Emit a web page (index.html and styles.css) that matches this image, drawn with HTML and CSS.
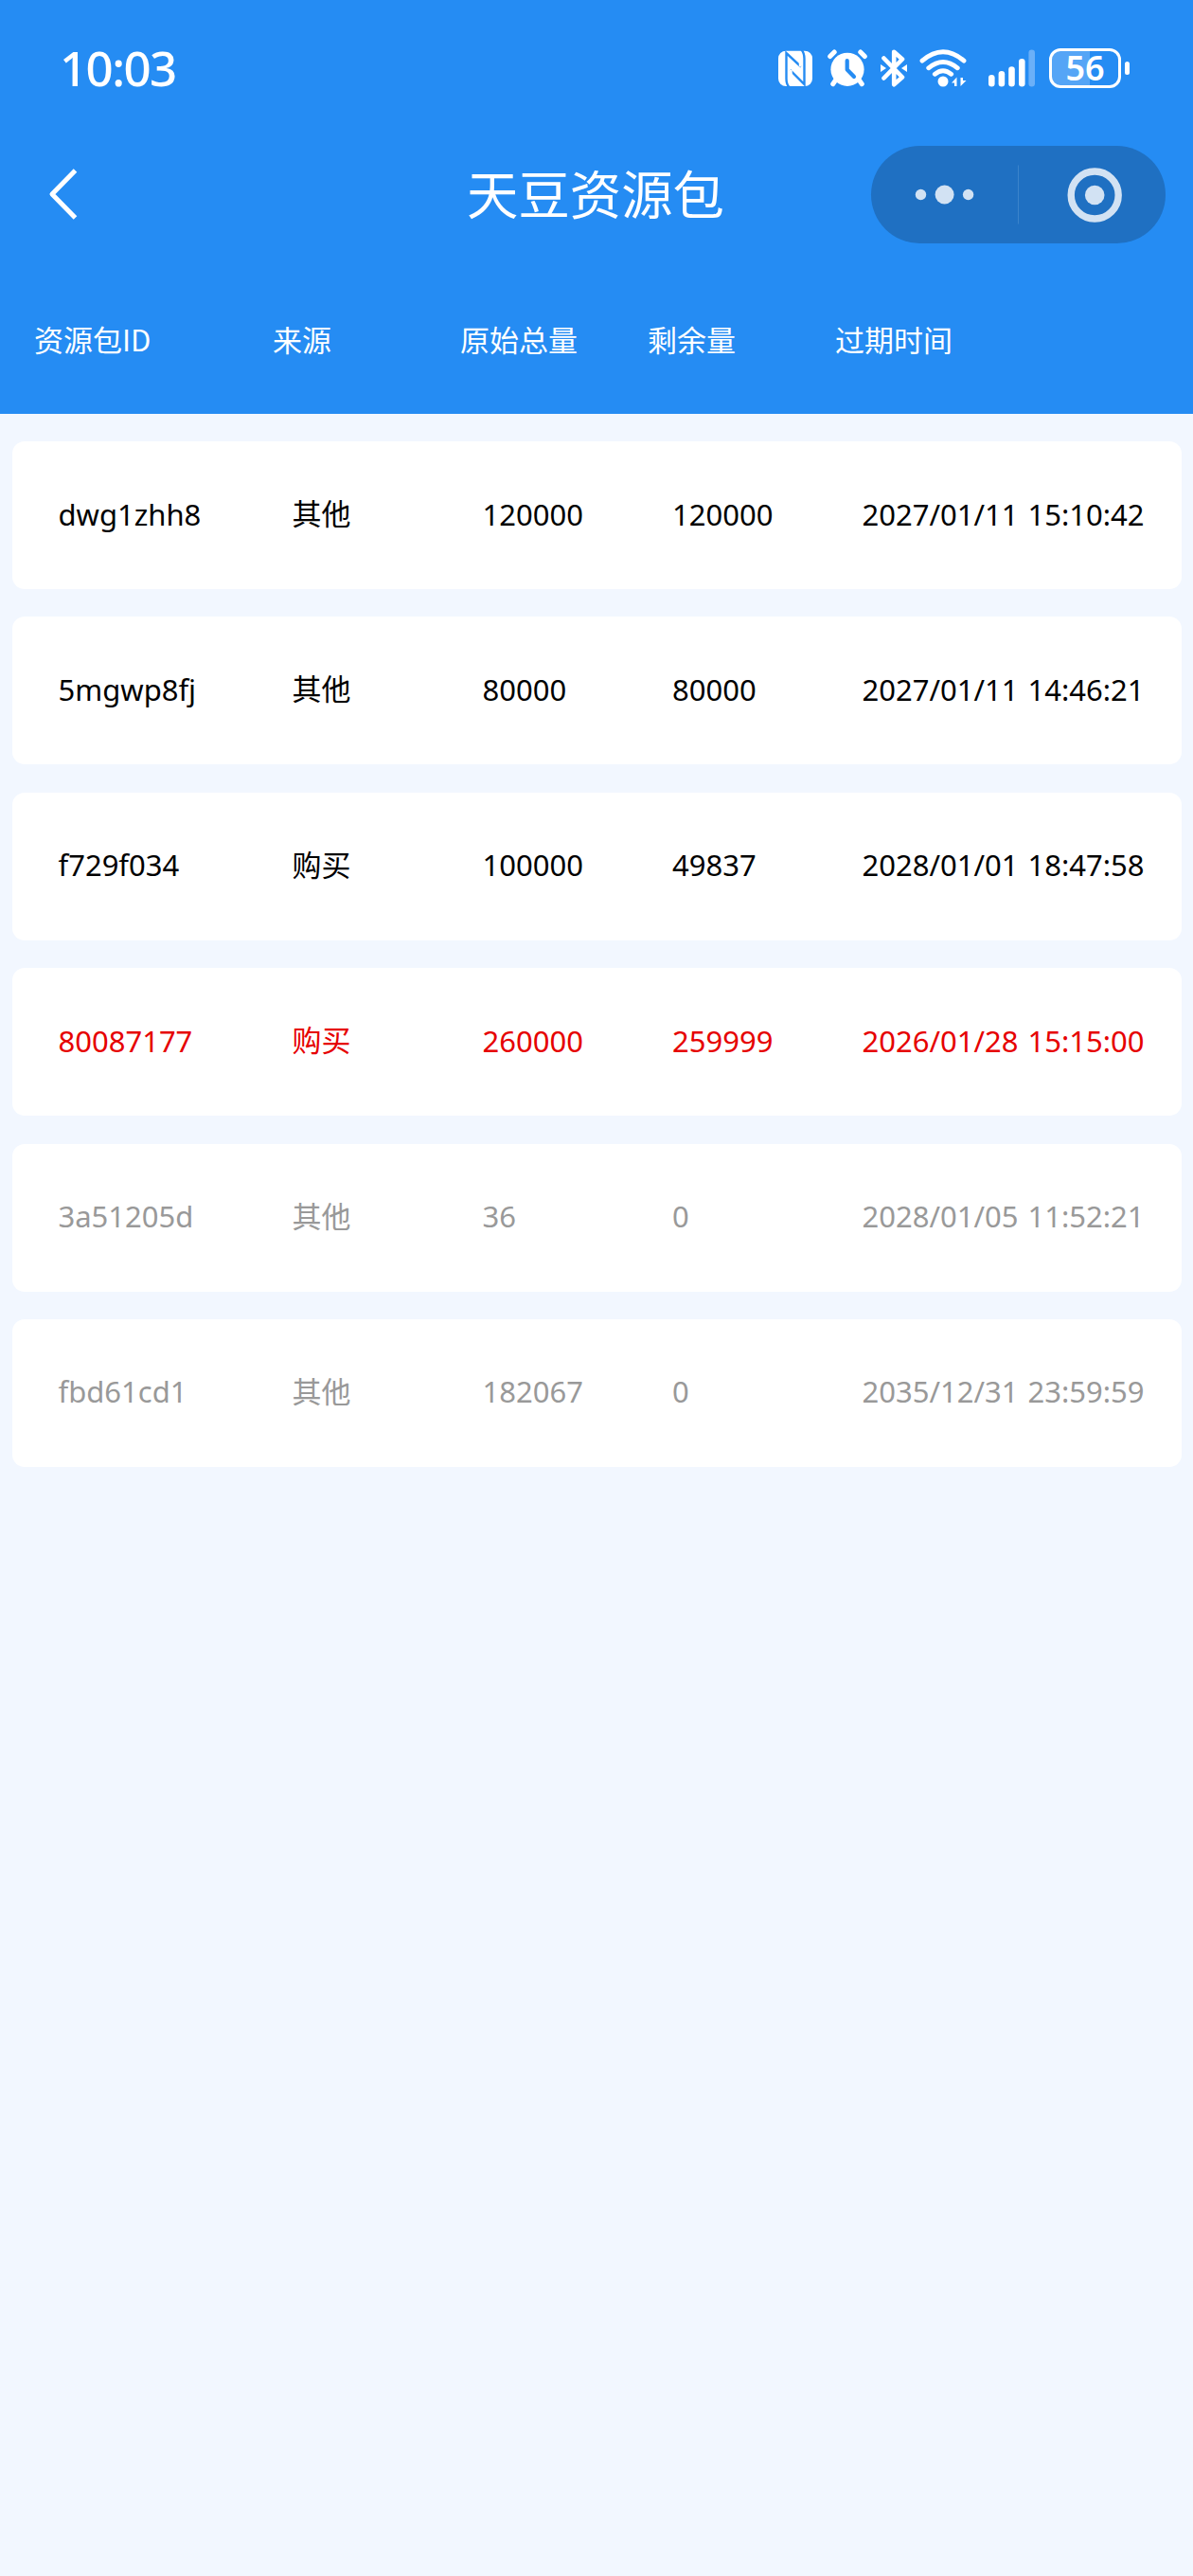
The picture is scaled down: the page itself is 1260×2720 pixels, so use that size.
FILE: index.html
```html
<!DOCTYPE html>
<html lang="zh-CN">
<head>
    <meta charset="UTF-8">
    <meta name="viewport" content="width=device-width, initial-scale=1.0">
    <title>天豆资源包</title>
    <link rel="stylesheet" href="styles.css">
</head>
<body>
    <div class="header">
        <!-- Status bar -->
        <div class="status-bar">
            <div class="time">10:03</div>
            <div class="status-icons">
                <svg class="nfc" width="36" height="40" viewBox="0 0 36 40">
                    <rect x="0" y="1.7" width="36" height="37.3" rx="8" fill="#fff"/>
                    <path d="M11.5 40 Q8.5 37 8.5 31 V4 L24 18.5" fill="none" stroke="#258cf3" stroke-width="2.4"/>
                    <path d="M24.5 0.5 Q27.5 4 27.5 10 V37 L12.5 22" fill="none" stroke="#258cf3" stroke-width="2.4"/>
                    <path d="M23.3 6 V18.5 M13.2 22 V33" fill="none" stroke="#fff" stroke-width="3"/>
                </svg>
                <svg class="alarm" width="42" height="40" viewBox="0 0 42 40">
                    <circle cx="21" cy="21.3" r="17.6" fill="#fff"/>
                    <path d="M2.7 7.5 L7.2 3 M34.8 3 L39.3 7.5 M9 32 L5.7 36.7 M33 32 L36.3 36.7" stroke="#fff" stroke-width="5" stroke-linecap="round"/>
                    <path d="M20.7 12 V21.5 L28 29" fill="none" stroke="#258cf3" stroke-width="4.2" stroke-linecap="round" stroke-linejoin="round"/>
                </svg>
                <svg class="bluetooth" width="28" height="40" viewBox="0 0 28 40">
                    <path d="M3.5 9.5 L23 29.5 L14.2 37.2 V2.8 L23 10.5 L3.5 30.5" fill="none" stroke="#fff" stroke-width="4.6" stroke-linecap="round" stroke-linejoin="round"/>
                    <path d="M0 16 L6 20 L0 24 Z M28 16 L22 20 L28 24 Z" fill="#fff"/>
                </svg>
                <svg class="wifi" width="50" height="40" viewBox="0 0 50 40">
                    <path d="M3 12.2 Q25 -6.5 47 12.2 M9.7 19.8 Q25 7.2 40.3 19.8 M16.3 26.3 Q25 19 33.7 26.3" fill="none" stroke="#fff" stroke-width="4.8" stroke-linecap="round"/>
                    <circle cx="25" cy="34" r="5.5" fill="#fff"/>
                    <path d="M34 35.5 L39.5 29.5 V39 H37 V35.5 Z M49.5 33 L43.5 39 V30 H46 V33 Z" fill="#fff"/>
                </svg>
                <svg class="signal" width="49" height="40" viewBox="0 0 49 40">
                    <rect x="0" y="27" width="6.6" height="12.6" rx="3.3" fill="#fff"/>
                    <rect x="10.6" y="23" width="6.6" height="16.6" rx="3.3" fill="#fff"/>
                    <rect x="21.2" y="18.3" width="6.6" height="21.3" rx="3.3" fill="#fff"/>
                    <rect x="32" y="10" width="6.6" height="29.6" rx="3.3" fill="#fff"/>
                    <rect x="42.4" y="0.6" width="6.6" height="39" rx="3.3" fill="#6bb0f8"/>
                </svg>
                <div class="battery">
                    <span class="battery-level">56</span>
                </div>
                <div class="battery-cap"></div>
            </div>
        </div>

        <!-- Nav bar -->
        <div class="nav-bar">
            <svg class="back" width="32" height="56" viewBox="0 0 32 56">
                <path d="M28.5 3 L4 28 L28.5 53" fill="none" stroke="#fff" stroke-width="5" stroke-linejoin="round"/>
            </svg>
            <h1>天豆资源包</h1>
            <div class="capsule">
                <svg width="311" height="103" viewBox="0 0 311 103">
                    <circle cx="52.5" cy="51.5" r="5.7"/>
                    <circle cx="77.6" cy="51.5" r="10"/>
                    <circle cx="102.6" cy="51.5" r="5.7"/>
                    <rect class="divider" x="155" y="20.5" width="1" height="62"/>
                    <circle class="ring" cx="236.2" cy="52" r="25"/>
                    <circle cx="236.2" cy="52" r="10.3"/>
                </svg>
            </div>
        </div>

        <div class="table-head">
            <span>资源包ID</span>
            <span>来源</span>
            <span>原始总量</span>
            <span>剩余量</span>
            <span>过期时间</span>
        </div>
    </div>

    <div class="list">
        <div class="card">
            <span>dwg1zhh8</span>
            <span class="source">其他</span>
            <span>120000</span>
            <span>120000</span>
            <span>2027/01/11 15:10:42</span>
        </div>
        <div class="card">
            <span>5mgwp8fj</span>
            <span class="source">其他</span>
            <span>80000</span>
            <span>80000</span>
            <span>2027/01/11 14:46:21</span>
        </div>
        <div class="card">
            <span>f729f034</span>
            <span class="source">购买</span>
            <span>100000</span>
            <span>49837</span>
            <span>2028/01/01 18:47:58</span>
        </div>
        <div class="card expiring">
            <span>80087177</span>
            <span class="source">购买</span>
            <span>260000</span>
            <span>259999</span>
            <span>2026/01/28 15:15:00</span>
        </div>
        <div class="card used">
            <span>3a51205d</span>
            <span class="source">其他</span>
            <span>36</span>
            <span>0</span>
            <span>2028/01/05 11:52:21</span>
        </div>
        <div class="card used">
            <span>fbd61cd1</span>
            <span class="source">其他</span>
            <span>182067</span>
            <span>0</span>
            <span>2035/12/31 23:59:59</span>
        </div>
    </div>
</body>
</html>
```
FILE: styles.css
```css
:root {
    --bg-color: #f2f7ff;
    --primary-color: #258cf3;
    --capsule-bg: #1f70c2;
    --capsule-icon: #d2e2f3;
}

* {
    margin: 0;
    padding: 0;
    box-sizing: border-box;
}

body {
    min-height: 100vh;
    background: var(--bg-color);
    font-family: 'Noto Sans', 'Noto Sans CJK SC', sans-serif;
    font-size: 31px;
    color: #000;
}

svg {
    display: block;
    flex: none;
}

.header {
    height: 437px;
    background: var(--primary-color);
    color: #fff;
}

/* Status bar */
.status-bar {
    display: flex;
    justify-content: space-between;
    align-items: center;
    height: 144px;
    padding: 0 67px 0 63px;
}

.time {
    padding-bottom: 3px;
    font-size: 51px;
    font-weight: 500;
    line-height: 60px;
    letter-spacing: -1.6px;
}

.status-icons {
    display: flex;
    align-items: center;
}

.nfc {
    margin-right: 1px;
}

.alarm {
    margin-left: 15px;
}

.bluetooth {
    margin-left: 14px;
}

.wifi {
    margin-left: 13px;
}

.signal {
    margin-left: 23px;
}

.battery {
    display: flex;
    justify-content: center;
    align-items: center;
    width: 76px;
    height: 42px;
    margin-left: 15px;
    border: 3px solid #fff;
    border-radius: 12px;
    background: linear-gradient(90deg, #55a5f6 57%, transparent 57%);
}

.battery-level {
    font-size: 36px;
    font-weight: 600;
    line-height: 36px;
}

.battery-cap {
    width: 5px;
    height: 14px;
    margin-left: 4px;
    border-radius: 3px;
    background: #fff;
}

/* Nav bar */
.nav-bar {
    display: grid;
    grid-template-columns: 311px 1fr 311px;
    align-items: center;
    height: 122px;
    padding: 0 29px;
}

.back {
    margin-left: 22px;
}

h1 {
    font-size: 54.4px;
    font-weight: 400;
    line-height: 60px;
    text-align: center;
    text-indent: -2px;
}

.capsule {
    height: 103px;
    border-radius: 52px;
    background: var(--capsule-bg);
    fill: var(--capsule-icon);
}

.capsule .divider {
    fill: #3a83cb;
}

.capsule .ring {
    fill: none;
    stroke: var(--capsule-icon);
    stroke-width: 7.4;
}

/* Table */
.table-head {
    display: grid;
    grid-template-columns: 252px 198px 198px 198px 1fr;
    align-items: center;
    height: 184px;
    padding-left: 36px;
    font-family: 'Noto Sans CJK SC', sans-serif;
    line-height: 40px;
    white-space: nowrap;
}

.list {
    display: flex;
    flex-direction: column;
    gap: 29.4px;
    padding: 29px 12.5px;
}

.card {
    display: grid;
    grid-template-columns: 247px 201px 200.5px 200.5px 1fr;
    align-items: center;
    height: 156px;
    padding: 0 0 3px 49px;
    border-radius: 13px;
    background: #fff;
    line-height: 42px;
    white-space: nowrap;
}

.card span:last-child {
    word-spacing: 2px;
}

.card .source {
    padding-bottom: 1px;
}

.card.expiring {
    color: #e60000;
}

.card.used {
    color: #999;
}
```
